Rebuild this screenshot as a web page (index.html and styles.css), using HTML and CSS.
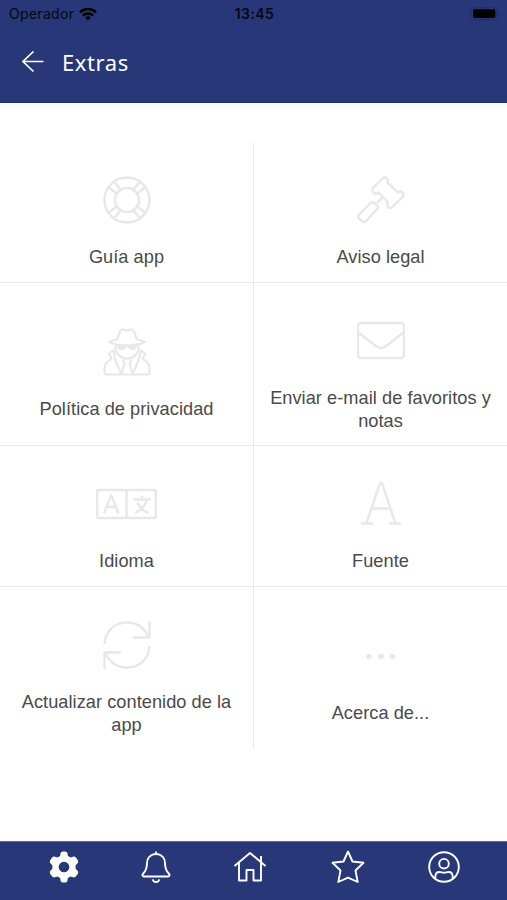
FILE: index.html
```
<!DOCTYPE html>
<html lang="es">
<head>
    <meta charset="UTF-8">
    <meta name="viewport" content="width=device-width, initial-scale=1.0">
    <title>Extras</title>
    <link rel="stylesheet" href="styles.css">
</head>
<body>
    <header class="header">
        <div class="status-bar">
            <div class="carrier">
                <span>Operador</span>
                <svg width="18" height="14" viewBox="0 0 18 14">
                    <path d="M1 5.300a11.300 11.300 0 0 1 16 0M4 8.500a7.100 7.100 0 0 1 10 0" fill="none" stroke="#000" stroke-width="2.600"/>
                    <path d="M9 13.500 6.200 10.600a4 4 0 0 1 5.600 0z" fill="#000"/>
                </svg>
            </div>
            <span class="time">13:45</span>
            <svg class="battery" width="30" height="14" viewBox="0 0 30 14">
                <rect x="1" y=".7" width="26" height="12" rx="3.500" fill="none" stroke="#202f69"/>
                <rect x="3" y="2.300" width="22.300" height="8.600" rx="1.600" fill="#000"/>
                <path d="M28 4.700v4a2.200 2.200 0 0 0 0-4z" fill="#202f69"/>
            </svg>
        </div>
        <div class="title-bar">
            <svg width="22" height="22" viewBox="0 0 22 22">
                <path d="M11.500 .5 1 10.500l10.500 10M1 10.500h20.500" fill="none" stroke="#fff" stroke-width="1.700"/>
            </svg>
            <h1>Extras</h1>
        </div>
    </header>

    <main class="menu">
        <a class="item">
            <svg class="icon" viewBox="0 0 48 48">
                <circle cx="24" cy="24" r="22.500"/>
                <circle cx="24" cy="24" r="12"/>
                <path d="M6 11.500l9 7M11.500 6l7 9M36.500 6l-7 9M42 11.500l-9 7M6 36.500l9-7M11.500 42l7-9M36.500 42l-7-9M42 36.500l-9-7"/>
            </svg>
            <span>Guía app</span>
        </a>
        <a class="item">
            <svg class="icon" viewBox="0 0 48 48">
                <path d="M15.500 12.500 25.500 2.500q2.500-2.500 4.500 0t.5 4L41 16.500q2.500-1.800 4.500 0t0 4.500L35.500 31q-2 2-4.200 0t-.3-4.500L21.500 16.500q-2.500 2-4.500.5t-1.500-4.500z"/>
                <path d="M25.500 21.500 20 27M2 38.500 13.500 27q2-1.500 4 0l2.500 2.500q2 2 0 4L9 45q-2.300 2-4.300 0L2 42.500q-2-2 0-4z"/>
            </svg>
            <span>Aviso legal</span>
        </a>
        <a class="item">
            <svg class="icon spy" viewBox="0 0 48 48">
                <path d="M6 14c3-1.500 6-2 8-2.500L17 3.500Q18 1 20.500 1.500q3.500 2 7 0Q30 1 31 3.500l3 8c2 .5 5 1 8 2.500-9 4.500-27 4.500-36 0z"/>
                <path d="M12.500 17v2c0 7 5 11.500 11.500 11.500S35.500 26 35.500 19v-2"/>
                <path class="solid" d="M14 17.500h20c0 3.500-2 4.500-4.500 4.500S26 20.500 24 19c-2 1.500-3 3-5.500 3S14 21 14 17.500z"/>
                <path d="M10.500 22 6 25.500 8.500 31C4 33 1.500 36 1.500 41v3q0 2.500 2.500 2.500h40q2.500 0 2.500-2.500v-3c0-5-2.500-8-7-10l2.500-5.500-4.500-3.500M10.500 22c0 9 5 17 8 24M37.500 22c0 9-5 17-8 24M19.500 31.500l2 4-3 10.500M28.500 31.500l-2 4 3 10.500"/>
            </svg>
            <span>Política de privacidad</span>
        </a>
        <a class="item">
            <svg class="icon" viewBox="0 0 48 48">
                <rect x="1" y="6" width="46" height="35" rx="3"/>
                <path d="M1.500 15.500 19.500 29.500q4.500 3.500 9 0L46.500 15.500"/>
            </svg>
            <span>Enviar e-mail de favoritos y notas</span>
        </a>
        <a class="item">
            <svg class="icon wide" viewBox="0 0 61 48">
                <rect x="1.200" y="10" width="58.600" height="28" rx="1.500"/>
                <path d="M30.500 10v28M8 33.500 15.200 15l7.200 18.500M10.500 27h9.500M37.500 19.500h17M45.500 15.500l1 4M51 20q-3 9-12 13M41.500 23q4 7.500 11 10"/>
            </svg>
            <span>Idioma</span>
        </a>
        <a class="item">
            <svg class="icon" viewBox="0 0 48 48">
                <path d="M9.500 43.500 22.500 4.500q1.500-3.500 3 0L38.500 43.500M14.500 28.500h19M4 43.500h12M32 43.500h12"/>
            </svg>
            <span>Fuente</span>
        </a>
        <a class="item">
            <svg class="icon" viewBox="0 0 48 48">
                <path d="M1.500 23C2 10 12 1.500 24 1.500c10 0 17.500 5.500 21.500 14.500M46.500 0v16.500H30M46.500 25C46 38 36 46.500 24 46.500 14 46.500 6.500 41 2.500 32M1.500 48V31.500H18"/>
            </svg>
            <span>Actualizar contenido de la app</span>
        </a>
        <a class="item">
            <svg class="icon" viewBox="0 0 48 48">
                <g class="dots">
                    <circle cx="12" cy="24.500" r="2.800"/>
                    <circle cx="24" cy="24.500" r="2.800"/>
                    <circle cx="35.500" cy="24.500" r="2.800"/>
                </g>
            </svg>
            <span>Acerca de...</span>
        </a>
    </main>

    <nav class="tab-bar">
        <a class="tab active">
            <svg viewBox="0 0 34 34">
                <path fill-rule="evenodd" d="M13.500 4q0-2.500 2.500-2.500h2q2.500 0 2.500 2.500l.4 2 2.700 1.600 2.400-.9q2-.6 3.200 1.300l1.700 2.200q1 2-.7 3.500l-1.600 1.500v3.600l1.600 1.500q1.700 1.500.7 3.500L29.200 26q-1.200 1.900-3.200 1.300l-2.400-.9-2.700 1.600-.4 2q0 2.500-2.500 2.500h-2q-2.500 0-2.500-2.500l-.4-2-2.700-1.600-2.400.9Q6 27.900 4.800 26l-1.700-2.200q-1-2 .7-3.500l1.600-1.500v-3.600l-1.600-1.500q-1.700-1.500-.7-3.500L4.800 8Q6 6.100 8 6.700l2.400.9L13.100 6zM17 11.700a5.300 5.300 0 1 0 0 10.600 5.300 5.300 0 0 0 0-10.600z"/>
            </svg>
        </a>
        <a class="tab bell">
            <svg viewBox="0 0 34 34">
                <path d="M17 1.500V4M17 4c-5.500 0-9 4-9 9 0 6-1.700 8.500-3.800 10.500-1.500 1.700-.6 3 .8 3h24c1.400 0 2.300-1.300.8-3C27.700 21.500 26 19 26 13c0-5-3.500-9-9-9zM13.800 29.300c.6 3.600 5.800 3.600 6.400 0"/>
            </svg>
        </a>
        <a class="tab home">
            <svg viewBox="0 0 34 34">
                <path d="M1.500 16 17 3l15.500 13M6 13v17.500h7.500V20h7v10.500H28V13M28 12V6"/>
            </svg>
        </a>
        <a class="tab star">
            <svg viewBox="0 0 34 34">
                <path d="M17 1.500l4.500 10 11 1.200-8 7.800 2.200 11.500-9.700-4.300L7.300 32l2.200-11.500-8-7.800 11-1.200z"/>
            </svg>
        </a>
        <a class="tab profile">
            <svg viewBox="0 0 34 34">
                <circle cx="17" cy="17" r="14.800"/>
                <circle cx="17" cy="13.700" r="4.800"/>
                <path d="M8.300 28.500v-1.800c0-3 1.500-4.700 4.200-4.700 1.800 0 2.700.7 4.500.7s2.700-.7 4.500-.7c2.700 0 4.200 1.700 4.200 4.700v1.800"/>
            </svg>
        </a>
    </nav>
</body>
</html>
```
FILE: styles.css
```
* {
    box-sizing: border-box;
}
body {
    display: flex;
    flex-direction: column;
    height: 100vh;
    margin: 0;
    background: #fff;
    font-family: "Liberation Sans", Arial, sans-serif;
}
svg {
    display: block;
    flex: none;
}

/* Header */
.header {
    height: 103px;
    background: #273777;
    border-bottom: 1px solid #1f2f73;
}
.status-bar {
    display: grid;
    grid-template-columns: 1fr auto 1fr;
    align-items: center;
    height: 27px;
    padding: 0 7px 0 9px;
    font-family: Inter, sans-serif;
    font-size: 14px;
    color: #050814;
}
.carrier {
    display: flex;
    align-items: center;
    gap: 5px;
    letter-spacing: 0.3px;
}
.time {
    font-weight: 600;
    letter-spacing: 0.4px;
}
.battery {
    justify-self: end;
}
.title-bar {
    display: flex;
    align-items: center;
    gap: 18px;
    height: 69px;
    padding-left: 22px;
}
.title-bar h1 {
    margin: 0 0 0;
    font-family: "Noto Sans", sans-serif;
    font-size: 22px;
    font-weight: 400;
    letter-spacing: 0.6px;
    color: #fff;
}

/* Menu */
.menu {
    display: grid;
    grid-template-columns: 254px 253px;
    grid-template-rows: 141px 163px 141px 162px;
    flex: 1;
    align-content: start;
    padding-top: 39px;
}
.item {
    display: flex;
    flex-direction: column;
    align-items: center;
    justify-content: center;
    gap: 22px;
    padding: 22px 12px 0;
    border-bottom: 1px solid #ebebeb;
    font-size: 18.2px;
    line-height: 23.5px;
    letter-spacing: 0.05px;
    text-align: center;
    color: #4a4a4a;
}
.item:nth-child(odd) {
    border-right: 1px solid #ebebeb;
}
.item:nth-last-child(-n+2) {
    border-bottom: none;
}
.icon {
    width: 48px;
    height: 48px;
    fill: none;
    stroke: #e8e8e8;
    stroke-width: 2.4;
    stroke-linejoin: round;
}
.icon.wide {
    width: 61px;
}
.icon.spy {
    stroke-width: 2.2;
}
.icon .solid {
    fill: #e8e8e8;
    stroke: none;
}
.icon .dots {
    fill: #e8e8e8;
    stroke: none;
}

/* Bottom tabs */
.tab-bar {
    display: flex;
    height: 59px;
    padding: 8px 0 0 47px;
    background: #273777;
    border-top: 1px solid #5f6a99;
}
.tab svg {
    width: 34px;
    height: 34px;
    fill: none;
    stroke: #fff;
    stroke-width: 1.9;
    stroke-linejoin: round;
}
.tab.active svg {
    fill: #fff;
    stroke: none;
}
.bell {
    margin-left: 58px;
}
.home {
    margin-left: 60px;
}
.star {
    margin-left: 64px;
}
.profile {
    margin-left: 62px;
}
```
